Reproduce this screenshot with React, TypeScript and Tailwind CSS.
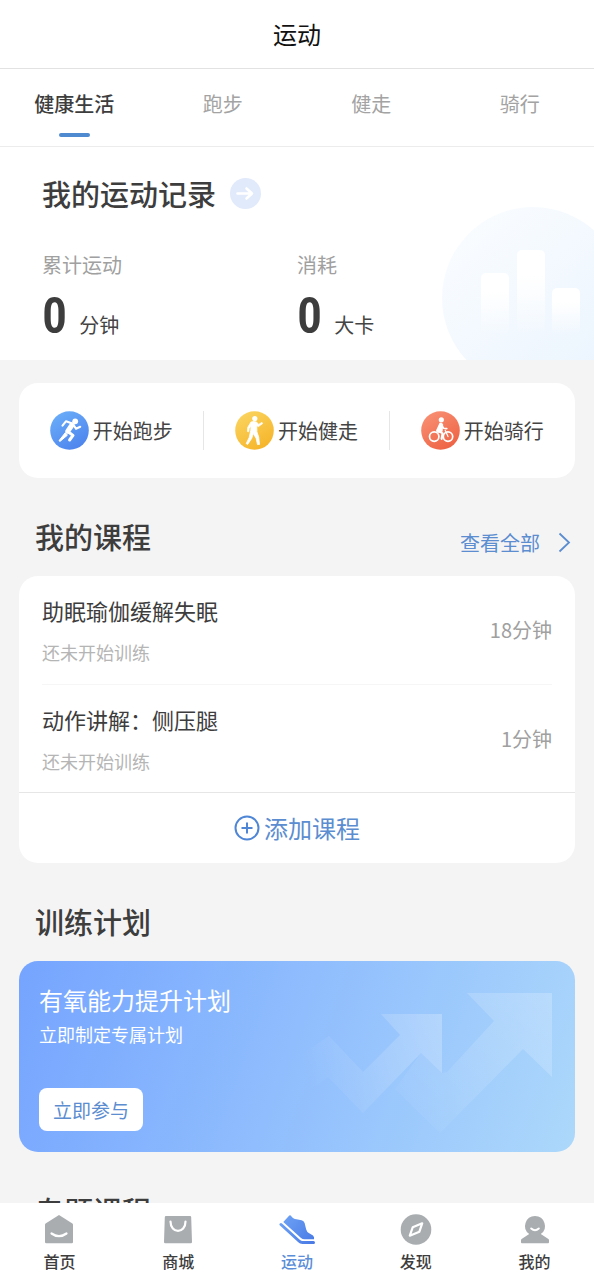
import { useState } from "react";
import type { ReactNode } from "react";

const tabs = ["健康生活", "跑步", "健走", "骑行"];

const courses = [
  { title: "助眠瑜伽缓解失眠", status: "还未开始训练", time: "18分钟" },
  { title: "动作讲解：侧压腿", status: "还未开始训练", time: "1分钟" },
];

const stats = [
  { label: "累计运动", value: "0", unit: "分钟" },
  { label: "消耗", value: "0", unit: "大卡" },
];

function RunIcon() {
  return (
    <svg className="size-[39px] shrink-0" viewBox="0 0 39 39" aria-hidden="true">
      <defs>
        <linearGradient id="run" x1="0" y1="0" x2="0.6" y2="1">
          <stop offset="0" stopColor="#6db1fa" />
          <stop offset="1" stopColor="#4f86ee" />
        </linearGradient>
      </defs>
      <circle cx="19.5" cy="19.5" r="19.3" fill="url(#run)" />
      <circle cx="25.2" cy="10.3" r="2.9" fill="#fff" />
      <g fill="none" stroke="#fff" strokeLinecap="round" strokeLinejoin="round">
        <path d="M12.5 14.6l3.6-4.4 6 2.2" strokeWidth="2.1" />
        <path d="M22 14l-4.2 6.2" strokeWidth="5" />
        <path d="M23.8 14.4l2.2 3.4 4.2-2" strokeWidth="2.1" />
        <path d="M18.4 21l4.6 3.4-3.4 4.6" strokeWidth="3" />
      </g>
      <path d="M15.4 21.6l2 2.6-7.4 6.2-1-.7z" fill="#fff" stroke="#fff" strokeLinejoin="round" />
    </svg>
  );
}

function WalkIcon() {
  return (
    <svg className="size-[39px] shrink-0" viewBox="0 0 39 39" aria-hidden="true">
      <defs>
        <linearGradient id="walk" x1="0" y1="0" x2="0.6" y2="1">
          <stop offset="0" stopColor="#fbd765" />
          <stop offset="1" stopColor="#f6b62c" />
        </linearGradient>
      </defs>
      <circle cx="19.5" cy="19.5" r="19.3" fill="url(#walk)" />
      <circle cx="19.8" cy="7.5" r="2.6" fill="#fff" />
      <path
        d="M16 11q3.4-1.3 6 .4l1.6 2 3.4-2 .6 1.2-4.2 3-1.6-.9.1 6.1 1.8 5.2.8 7.4-2 .2-1.4-6.2-2.8-4.8-1.6 4.8-4 6-1.5-.8 3-6.2 1.6-7.2.2-4-1.8 2.2-.4 3.4-1.3-.2.2-4.2z"
        fill="#fff"
        stroke="#fff"
        strokeWidth="0.8"
        strokeLinejoin="round"
      />
    </svg>
  );
}

function RideIcon() {
  return (
    <svg className="size-[39px] shrink-0" viewBox="0 0 39 39" aria-hidden="true">
      <defs>
        <linearGradient id="ride" x1="0" y1="0" x2="0.6" y2="1">
          <stop offset="0" stopColor="#fa9478" />
          <stop offset="1" stopColor="#ee6546" />
        </linearGradient>
      </defs>
      <circle cx="19.5" cy="19.5" r="19.3" fill="url(#ride)" />
      <circle cx="20.3" cy="8.8" r="2.6" fill="#fff" />
      <g fill="none" stroke="#fff" strokeLinecap="round" strokeLinejoin="round">
        <circle cx="13.2" cy="25.6" r="4.7" strokeWidth="1.7" />
        <circle cx="27" cy="25.6" r="4.7" strokeWidth="1.7" />
        <path d="M27 25.6l-2.8-6.4" strokeWidth="1.2" />
        <path d="M20.4 13.6l2.2 3.6 3.2.4" strokeWidth="1.6" />
        <path d="M17.6 19.8l4 2.6-1 5.4" strokeWidth="2.2" />
      </g>
      <path d="M18.6 11.8q3-.4 3.6 2l-.6 6.800-3.600 1.400q-3.600-.6-2.800-3z" fill="#fff" />
    </svg>
  );
}

function HomeIcon() {
  return (
    <svg className="size-8" viewBox="0 0 32 32" aria-hidden="true">
      <path d="M16 2l13.4 8.6q.6.4.6 1.2V29q0 1.2-1.2 1.2H3.2Q2 30.2 2 29V11.8q0-.8.6-1.2z" fill="#a9adb0" />
      <path d="M8.5 20.5q7.5 5.4 15 0" fill="none" stroke="#fff" strokeWidth="2.2" strokeLinecap="round" />
    </svg>
  );
}

function ShopIcon() {
  return (
    <svg className="size-8" viewBox="0 0 32 32" aria-hidden="true">
      <path d="M4 3h24q1.2 0 1.2 1.2L30 29q0 1.2-1.2 1.2H3.2Q2 30.2 2 29L2.8 4.2Q2.8 3 4 3z" fill="#a9adb0" />
      <path d="M8.5 8.5c0 12.5 15 12.5 15 0" fill="none" stroke="#fff" strokeWidth="2.2" strokeLinecap="round" />
    </svg>
  );
}

function ShoeIcon() {
  return (
    <svg className="h-8 w-9" viewBox="0 0 36 32" aria-hidden="true">
      <defs>
        <linearGradient id="shoe" gradientUnits="userSpaceOnUse" x1="2" y1="4" x2="34" y2="30">
          <stop offset="0" stopColor="#6ea3f5" />
          <stop offset="1" stopColor="#4a7be6" />
        </linearGradient>
      </defs>
      <path
        d="M4.300 9L10.300 2.600Q11.200 1.800 12 2.800Q14 6.200 17.500 6.200L22.500 7.200Q25 7.800 25.600 10L27.200 16.500Q27.800 18.800 29.800 20L34 22.600Q35.600 24 35 26.300H25.500Q23.500 26.300 22 25z"
        fill="url(#shoe)"
      />
      <path
        d="M2 11.500L20 28q1.500 1.500 3.500 1.500h11"
        fill="none"
        stroke="url(#shoe)"
        strokeWidth="3"
        strokeLinecap="round"
      />
    </svg>
  );
}

function DiscoverIcon() {
  return (
    <svg className="size-8" viewBox="0 0 32 32" aria-hidden="true">
      <circle cx="16" cy="16.5" r="15.3" fill="#a9adb0" />
      <path
        d="M22.2 10.3l-2.8 8.4-9.6 4 2.9-8.4z"
        fill="none"
        stroke="#fff"
        strokeWidth="2.2"
        strokeLinejoin="round"
      />
    </svg>
  );
}

function MineIcon() {
  return (
    <svg className="size-8" viewBox="0 0 32 32" aria-hidden="true">
      <path
        d="M16 3a10 10 0 0 1 5.800 18.100l7.600 5q.6.500.6 1.200v2q0 .9-.9.900H2.900Q2 30.200 2 29.300v-2q0-.7.600-1.200l7.600-5A10 10 0 0 1 16 3z"
        fill="#a9adb0"
      />
      <path d="M12.2 15.5q3.8 3.4 7.6 0" fill="none" stroke="#fff" strokeWidth="2" strokeLinecap="round" />
    </svg>
  );
}

const actions = [
  { label: "开始跑步", icon: <RunIcon /> },
  { label: "开始健走", icon: <WalkIcon /> },
  { label: "开始骑行", icon: <RideIcon /> },
];

const navItems = [
  { label: "首页", icon: <HomeIcon /> },
  { label: "商城", icon: <ShopIcon /> },
  { label: "运动", icon: <ShoeIcon />, active: true },
  { label: "发现", icon: <DiscoverIcon /> },
  { label: "我的", icon: <MineIcon /> },
];

function SectionTitle({ title, children }: { title: string; children?: ReactNode }) {
  return (
    <div className="flex items-center justify-between pt-[37px] pr-[23px] pb-[18px] pl-[35px]">
      <h2 className="text-[29px] leading-[43px] font-medium text-[#3d3d3d]">{title}</h2>
      {children}
    </div>
  );
}

export default function App() {
  const [tab, setTab] = useState(0);

  return (
    <div className="flex h-screen flex-col bg-[#f4f4f4] font-['Noto_Sans_CJK_SC',sans-serif] text-[#444]">
      <header className="shrink-0 border-b border-[#e2e2e2] bg-white py-4 text-center">
        <h1 className="text-2xl leading-9 text-[#111]">运动</h1>
      </header>

      {/* Tabs */}
      <nav className="grid shrink-0 grid-cols-4 border-b border-[#ececec] bg-white">
        {tabs.map((item, index) => (
          <button
            key={item}
            type="button"
            onClick={() => setTab(index)}
            className={
              index === tab
                ? "flex flex-col items-center pt-[21px] pb-[9px] text-xl leading-7 font-medium text-[#3d3d3d]"
                : "flex flex-col items-center pt-[21px] pb-[9px] text-xl leading-7 text-[#a3a3a3]"
            }
          >
            {item}
            <span
              className={
                index === tab
                  ? "mt-[15px] h-1 w-[31px] rounded-full bg-[#4f8ad0]"
                  : "mt-[15px] h-1 w-[31px]"
              }
            />
          </button>
        ))}
      </nav>

      <main className="min-h-0 flex-1 overflow-y-auto [scrollbar-width:none]">
        {/* Records */}
        <section className="relative overflow-hidden bg-white px-[42px] pt-[25px] pb-[14px]">
          <svg className="absolute right-0 bottom-0 h-[154px] w-[154px]" viewBox="0 0 154 154" aria-hidden="true">
            <defs>
              <linearGradient id="disc" x1="0" y1="0" x2="0.8" y2="0.9">
                <stop offset="0" stopColor="#fbfdff" />
                <stop offset="1" stopColor="#ecf5fe" />
              </linearGradient>
              <linearGradient id="bar" x1="0" y1="0" x2="0" y2="1">
                <stop offset="0.3" stopColor="#fff" />
                <stop offset="1" stopColor="#fff" stopOpacity="0" />
              </linearGradient>
            </defs>
            <circle cx="93" cy="92" r="91" fill="url(#disc)" />
            <rect x="41" y="67" width="28" height="62" rx="5" fill="url(#bar)" />
            <rect x="77" y="44" width="28" height="85" rx="5" fill="url(#bar)" />
            <rect x="112" y="82" width="28" height="47" rx="5" fill="url(#bar)" />
          </svg>
          <div className="relative flex items-center gap-[14px]">
            <h2 className="text-[29px] leading-[43px] font-medium text-[#3d3d3d]">我的运动记录</h2>
            <button type="button" aria-label="查看运动记录">
              <svg className="size-[31px]" viewBox="0 0 31 31" aria-hidden="true">
                <circle cx="15.5" cy="15.5" r="15.5" fill="#e1eafb" />
                <path
                  d="M7.500 15.500h14M16.500 10.500l5.500 5-5.500 5"
                  fill="none"
                  stroke="#fff"
                  strokeWidth="2.6"
                  strokeLinecap="round"
                  strokeLinejoin="round"
                />
              </svg>
            </button>
          </div>
          <div className="relative mt-9 grid grid-cols-2">
            {stats.map((item) => (
              <div key={item.label}>
                <p className="text-xl leading-7 text-[#a0a0a0]">{item.label}</p>
                <p className="mt-2 flex items-baseline gap-3">
                  <span className="font-['Roboto_Condensed',Roboto,sans-serif] text-[50px] leading-[59px] font-semibold text-[#3d3d3d]">
                    {item.value}
                  </span>
                  <span className="text-xl leading-7">{item.unit}</span>
                </p>
              </div>
            ))}
          </div>
        </section>

        {/* Start buttons */}
        <section className="mx-[19px] mt-[23px] grid grid-cols-3 rounded-[19px] bg-white py-7">
          {actions.map((item, index) => (
            <button
              key={item.label}
              type="button"
              className={
                index < actions.length - 1
                  ? "flex items-center justify-center gap-1 border-r border-[#e6e6e6] text-xl leading-[39px]"
                  : "flex items-center justify-center gap-1 text-xl leading-[39px]"
              }
            >
              {item.icon}
              {item.label}
            </button>
          ))}
        </section>

        <SectionTitle title="我的课程">
          <a href="#courses" className="mt-3 flex items-center gap-[18px] text-xl leading-7 text-[#5b8dd0]">
            查看全部
            <svg className="h-[21px] w-[13px]" viewBox="0 0 13 21" aria-hidden="true">
              <path d="M1.500 1.500l9.500 9-9.500 9" fill="none" stroke="currentColor" strokeWidth="1.8" />
            </svg>
          </a>
        </SectionTitle>
        <section className="mx-[19px] rounded-[19px] bg-white">
          <ul className="px-[23px]">
            {courses.map((course, index) => (
              <li
                key={course.title}
                className={
                  index > 0
                    ? "flex items-center justify-between border-t border-[#f6f6f6] pt-[18px] pb-[17px]"
                    : "flex items-center justify-between pt-[18px] pb-[18px]"
                }
              >
                <div>
                  <h3 className="text-[22px] leading-8 text-[#3d3d3d]">{course.title}</h3>
                  <p className="mt-3 text-lg leading-7 text-[#b5b5b5]">{course.status}</p>
                </div>
                <span className="text-xl leading-7 text-[#a0a0a0]">{course.time}</span>
              </li>
            ))}
          </ul>
          <button
            type="button"
            className="flex w-full items-center justify-center gap-1 border-t border-[#e6e6e6] py-[17px] text-2xl leading-9 text-[#5b8dd0]"
          >
            <svg className="size-[26px]" viewBox="0 0 26 26" fill="none" stroke="#4f86d6" aria-hidden="true">
              <circle cx="13" cy="13" r="11.5" strokeWidth="2" />
              <path d="M13 7.500v11M7.500 13h11" strokeWidth="2" />
            </svg>
            添加课程
          </button>
        </section>

        <SectionTitle title="训练计划" />
        <section className="relative mx-[19px] overflow-hidden rounded-[19px] bg-linear-[110deg] from-[#75a4ff] to-[#acd8fb] px-5 pt-[21px] pb-[21px] text-white">
          <svg className="absolute top-0 right-0 h-[191px] w-[295px]" viewBox="0 0 295 191" aria-hidden="true">
            <defs>
              <linearGradient id="arrowSmall" gradientUnits="userSpaceOnUse" x1="22" y1="105" x2="160" y2="60">
                <stop offset="0" stopColor="#fff" stopOpacity="0" />
                <stop offset="1" stopColor="#fff" stopOpacity="0.24" />
              </linearGradient>
              <linearGradient id="arrowBig" gradientUnits="userSpaceOnUse" x1="130" y1="160" x2="272" y2="40">
                <stop offset="0" stopColor="#fff" stopOpacity="0.03" />
                <stop offset="1" stopColor="#fff" stopOpacity="0.22" />
              </linearGradient>
            </defs>
            <path
              d="M14 98L49 75l34 36 37-37-19-21h61v59l-21-20-58 60-35-36-28 20z"
              fill="url(#arrowSmall)"
            />
            <path
              d="M162 112l5-1 47-51-27-28h85v84l-29-28-83 84-45-44 26-36z"
              fill="url(#arrowBig)"
            />
          </svg>
          <div className="relative">
            <h3 className="text-2xl leading-9">有氧能力提升计划</h3>
            <p className="mt-[2px] text-lg leading-7">立即制定专属计划</p>
            <button
              type="button"
              className="mt-10 rounded-lg bg-white px-[14px] text-[19px] leading-[43px] text-[#5b8dd0]"
            >
              立即参与
            </button>
          </div>
        </section>

        <SectionTitle title="专题课程" />
      </main>

      {/* Bottom bar */}
      <nav className="grid shrink-0 grid-cols-5 bg-white pt-[10px] pb-[7px]">
        {navItems.map((item) => (
          <a
            key={item.label}
            href="#nav"
            className={
              item.active
                ? "flex flex-col items-center gap-1 text-base leading-6 font-medium text-[#5b8dd8]"
                : "flex flex-col items-center gap-1 text-base leading-6 font-medium text-[#3d3d3d]"
            }
          >
            {item.icon}
            {item.label}
          </a>
        ))}
      </nav>
    </div>
  );
}
